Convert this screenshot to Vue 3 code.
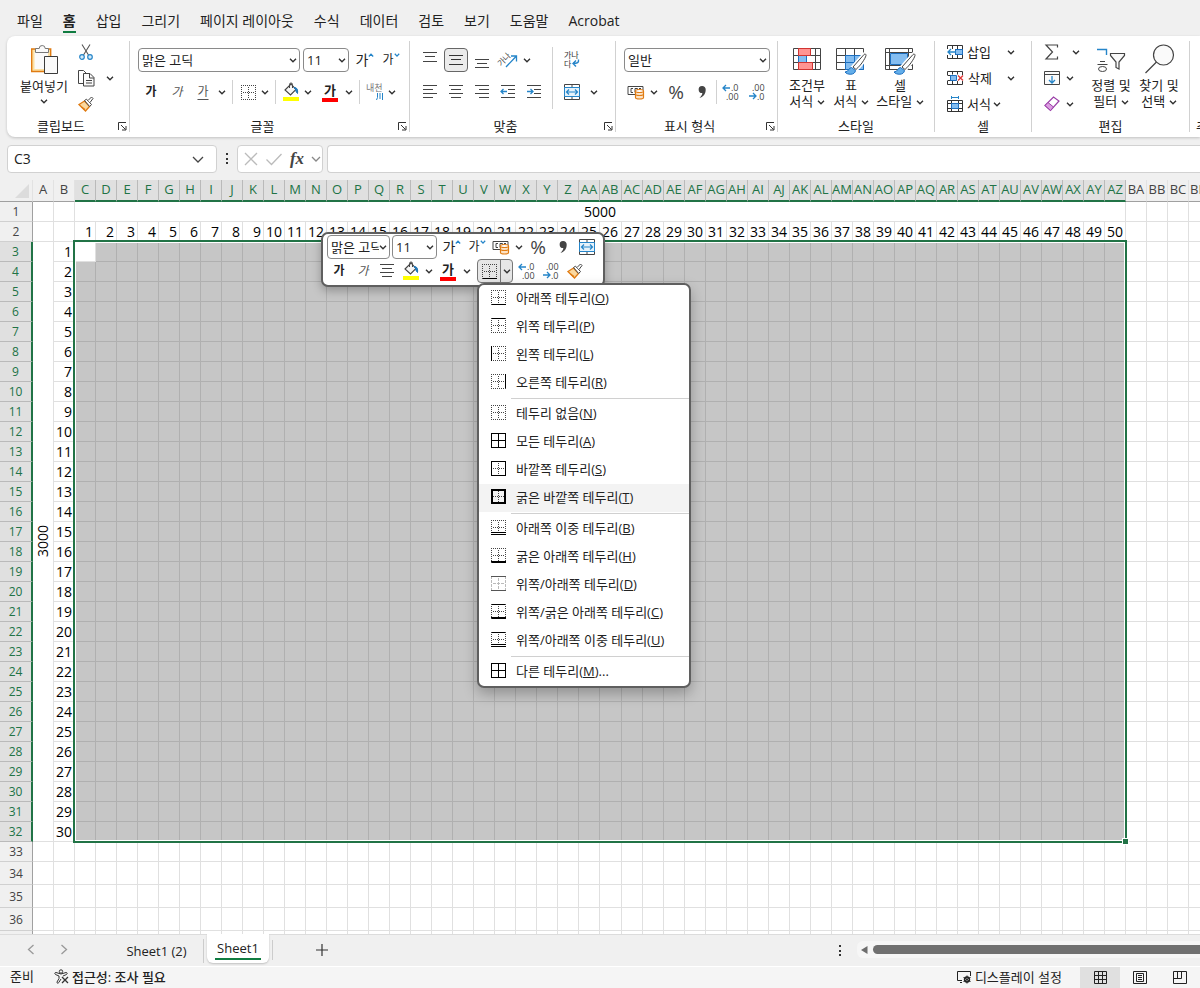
<script setup>
import { h, ref } from 'vue'

const icons = {
  chev: [8, 5, '<path d="M1 .8 4 3.8 7 .8" fill="none" stroke="#333" stroke-width="1.4"/>'],
  chevBig: [12, 7, '<path d="M1 1 6 6 11 1" fill="none" stroke="#444" stroke-width="1.3"/>'],
  chevPale: [10, 6, '<path d="M1 1 5 5 9 1" fill="none" stroke="#888" stroke-width="1.3"/>'],
  up: [6, 4, '<path d="M.8 3.5 3 1.2 5.2 3.5" fill="none" stroke="#2585c9" stroke-width="1.3"/>'],
  down: [6, 4, '<path d="M.8 .8 3 3.1 5.2 .8" fill="none" stroke="#2585c9" stroke-width="1.3"/>'],
  launch: [9, 9, '<path d="M.5 8V.5H8M3 3l4.5 4.5M8 4v4H4" fill="none" stroke="#333"/>'],
  paste: [29, 31, '<path d="M1.7 5h19v22.5h-19z" fill="#fde0a2" stroke="#e07b12" stroke-width="1.4"/><path d="M4.5 8h13.5v17H4.5z" fill="#fafafa"/><path d="M5.5 8.5V4.5h3.7a3 3 0 0 1 6 0h3.3v4z" fill="#fafafa" stroke="#777"/><path d="M14.5 12.5h13v17h-13z" fill="#fafafa" stroke="#3b3b3b"/>'],
  cut: [16, 18, '<path d="M4 1.5 10.5 12M12 1.5 5.5 12" stroke="#555" stroke-width="1.1"/><circle cx="4" cy="14" r="2.3" fill="#d5eaf8" stroke="#2585c9" stroke-width="1.2"/><circle cx="12" cy="14" r="2.3" fill="#d5eaf8" stroke="#2585c9" stroke-width="1.2"/>'],
  copy: [17, 17, '<path d="M5 13.5H.5V.5h5l2.5 2.5" fill="none" stroke="#444"/><path d="M5.5 3.5H12l4 4v8.5H5.5z" fill="#fafafa" stroke="#444"/><path d="M11.5 4v4H16M8 10.5h6M8 13h6" fill="none" stroke="#444"/>'],
  brush: [16, 16, '<path d="M1 8.5 6.5 5l5 5.5L7.5 15z" fill="#fbd9a0" stroke="#e07b12" stroke-width="1.3"/><path d="M3.5 11 7 13.5M5 12l1.5 2" stroke="#e07b12" stroke-width="1.2"/><path d="m6.5 4.5 2-1.3 5 5.3-1.8 2z" fill="#fff" stroke="#444"/><path d="M10 4.5 13.5 1l1.5 1.5-3 4" fill="#fff" stroke="#444"/>'],
  bucket: [18, 20, '<path d="M3 8 9 2l5 5.5-5.5 5.5z" fill="#f5f5f5" stroke="#444" stroke-width="1.1"/><path d="M7.5 6V2.5a1.5 1.5 0 0 1 3 0V6" fill="none" stroke="#444"/><path d="M12 5.5c3 0 4 2 3.5 6-1-1-1.7-2-2-4z" fill="#2585c9" stroke="#1c6fb0"/><path d="M1 15h16v4H1z" fill="#ff0"/>'],
  currency: [18, 16, '<path d="M1 2.5h15v8H1z" fill="#fff" stroke="#444"/><path d="M6 4.5H4v4h2M8 8.5v-4h2.5v4M12 4.5h2" fill="none" stroke="#444"/><path d="M8.5 7v6.5c0 2 8 2 8 0V7" fill="#fde3c5" stroke="#e07b12" stroke-width="1.2"/><ellipse cx="12.5" cy="7" rx="4" ry="1.5" fill="#fff" stroke="#e07b12" stroke-width="1.2"/><path d="M8.5 10c0 2 8 2 8 0" fill="none" stroke="#e07b12" stroke-width="1.2"/>'],
  comma: [10, 14, '<path d="M5 1a3.5 3.5 0 0 1 3.7 3.7C8.7 9 6 12 2.5 13c2-2 2.8-3.5 2.8-5A3.5 3.5 0 1 1 5 1z" fill="#444"/>'],
  merge: [16, 16, '<path d="M.5.5h15v15H.5z" fill="#fff" stroke="#444"/><path d="M8 .5v3M8 12.5v3" stroke="#444"/><path d="M.5 3.5h15v9H.5z" fill="#e6f2fa" stroke="#2585c9"/><path d="M2.5 8h11M5 5.5 2.5 8 5 10.5M11 5.5 13.5 8 11 10.5" fill="none" stroke="#2585c9" stroke-width="1.2"/>'],
  decInc: [18, 18, '<path d="M1 5h7M4 2 1 5l3 3" fill="none" stroke="#2585c9" stroke-width="1.3"/><text x="9" y="8" font-size="9" fill="#444">.0</text><text x="4" y="17" font-size="9" fill="#444">.00</text>'],
  decDec: [18, 18, '<path d="M1 13h7M5 10l3 3-3 3" fill="none" stroke="#2585c9" stroke-width="1.3"/><text x="4" y="8" font-size="9" fill="#444">.00</text><text x="9" y="17" font-size="9" fill="#444">.0</text>'],
  top: [24, 24, '<path d="M5 4.5h14M7 8.5h10M5 13.5h14" stroke="#444"/>'],
  middle: [24, 24, '<path d="M5 7.5h14M7 11.5h10M5 16.5h14" stroke="#333"/>'],
  bottom: [24, 24, '<path d="M5 11.5h14M7 15.5h10M5 19.5h14" stroke="#444"/>'],
  left: [24, 24, '<path d="M5 5.5h14M5 9.5h10M5 13.5h14M5 17.5h10" stroke="#444"/>'],
  center: [24, 24, '<path d="M5 5.5h14M7 9.5h10M5 13.5h14M7 17.5h10" stroke="#444"/>'],
  right: [24, 24, '<path d="M5 5.5h14M9 9.5h10M5 13.5h14M9 17.5h10" stroke="#444"/>'],
  outdent: [24, 24, '<path d="M5 5.5h14M12 9.5h7M12 13.5h7M5 17.5h14" stroke="#444"/><path d="M5 11.5h6M7.5 9 5 11.5 7.5 14" fill="none" stroke="#2585c9" stroke-width="1.3"/>'],
  indent: [24, 24, '<path d="M5 5.5h14M12 9.5h7M12 13.5h7M5 17.5h14" stroke="#444"/><path d="M5 11.5h6M8.5 9l2.5 2.5L8.5 14" fill="none" stroke="#2585c9" stroke-width="1.3"/>'],
  angle: [18, 18, '<text x="-3" y="12" font-size="8" fill="#444" transform="rotate(-45 4 8)">가나</text><path d="M7 16 17 5.5M12 5h5.5v5.5" fill="none" stroke="#2585c9" stroke-width="1.3"/>'],
  wrap: [18, 18, '<text x="1" y="7" font-size="8" fill="#333">가나</text><text x="1" y="16" font-size="8" fill="#333">다</text><path d="M15.5 8.5c.5 3-1 4-5.5 4M13 9.5l-3 3 3 3" fill="none" stroke="#2585c9" stroke-width="1.4"/>'],
  phonetic: [18, 20, '<text x="0" y="9" font-size="9" fill="#777">내천</text><path d="M11.5 11v4.5l-1 2.5M14 11v6M16.5 11v7" fill="none" stroke="#2585c9"/>'],
  cond: [28, 22, '<path d="M.5.5h27v21H.5zM.5 7.5h27M.5 14.5h27M5.5.5v21M22.5.5v21" fill="#fff" stroke="#444"/><path d="M5.5 7.5h8v7h-8z" fill="#84bdf0" stroke="#1c6fc0"/><path d="M5.5.5h12v7h-12zM5.5 14.5h14v7h-14z" fill="#ff9492" stroke="#d13431"/>'],
  table: [31, 28, '<path d="M.5.5h27v21H.5zM.5 7.5h27M.5 14.5h27M9.5.5v21M18.5.5v21" fill="#fff" stroke="#444"/><path d="M9.5 7.5h18v14h-18z" fill="#84bdf0" stroke="#1c6fc0"/><path d="M9.5 14.5h18M18.5 7.5v14" stroke="#1c6fc0"/><path d="M28 6.5 17 19l3 2.5C25 17 29 11 30 7.5c.3-1.2-1-2-2-1z" fill="#fff" stroke="#fff" stroke-width="4"/><path d="M28 6.5 17 19l3 2.5C25 17 29 11 30 7.5c.3-1.2-1-2-2-1z" fill="#fff" stroke="#444"/><path d="M15.5 19.5c-3 0-2.5 4.5-6.5 4.5 2 3 10 3.5 10.5-1.5z" fill="#63aeea" stroke="#1c6fc0"/>'],
  style: [31, 28, '<path d="M.5.5h27v21H.5zM.5 4.5h27M.5 17.5h27M4.5.5v21M23.5.5v21" fill="#fff" stroke="#444"/><path d="M5.5 5.5h17v11h-17z" fill="#84bdf0" stroke="#1c6fc0"/><path d="M28 6.5 17 19l3 2.5C25 17 29 11 30 7.5c.3-1.2-1-2-2-1z" fill="#fff" stroke="#fff" stroke-width="4"/><path d="M28 6.5 17 19l3 2.5C25 17 29 11 30 7.5c.3-1.2-1-2-2-1z" fill="#fff" stroke="#444"/><path d="M15.5 19.5c-3 0-2.5 4.5-6.5 4.5 2 3 10 3.5 10.5-1.5z" fill="#63aeea" stroke="#1c6fc0"/>'],
  insert: [16, 14, '<path d="M.5.5h15v13H.5zM.5 4.5h15M.5 9.5h15M5.5.5v13M10.5.5v13" fill="#fff" stroke="#333"/><path d="M8.5 4.5h7v5h-7z" fill="#84bdf0" stroke="#1c6fc0"/><path d="M0 4h8v6H0z" fill="#fff"/><path d="M1 7h8M4 4 1 7l3 3" fill="none" stroke="#2585c9" stroke-width="1.3"/>'],
  remove: [17, 14, '<path d="M.5 4V.5h15V4M.5 10v3.5h15V10M.5 4.5h4M.5 9.5h4M5.5.5v3M10.5.5v3M5.5 10v3M10.5 10v3" fill="none" stroke="#333"/><path d="M3.5 4.5h6v5h-6z" fill="#84bdf0" stroke="#1c6fc0"/><path d="m11 4.5 5 5M16 4.5l-5 5" stroke="#e03a3a" stroke-width="1.4"/>'],
  format: [16, 16, '<path d="M.5 4.5h15v11H.5zM.5 7.5h15M.5 12.5h15M4.5 4.5v11M11.5 4.5v11" fill="#fff" stroke="#333"/><path d="M4.5 7.5h7v5h-7z" fill="#84bdf0" stroke="#1c6fc0"/><path d="M4 1.5h8M4.5 0v3M11.5 0v3" stroke="#2585c9"/>'],
  sigma: [14, 16, '<path d="M12.5 3.5V1H1l6.5 7L1 15h11.5v-2.5" fill="none" stroke="#444" stroke-width="1.2"/>'],
  fill: [16, 14, '<path d="M.5.5h15v13H.5zM.5 3.5h15" fill="#fafafa" stroke="#444"/><path d="M8 5v7M5 9l3 3 3-3" fill="none" stroke="#2585c9" stroke-width="1.3"/>'],
  eraser: [16, 16, '<path d="m1 9.5 8.5-8.5L15 5 6.5 14.5z" fill="#fff" stroke="#9b3fa8" stroke-width="1.2"/><path d="m1 9.5 3-3L9.5 11l-3 3.5z" fill="#dc9de2" stroke="#9b3fa8"/>'],
  sort: [30, 25, '<path d="M1 1.5h9.5V7" fill="none" stroke="#2585c9" stroke-width="1.4"/><path d="M4 13.5h5M1.5 16.5h10" stroke="#444"/><ellipse cx="6.5" cy="21" rx="4" ry="2.5" fill="none" stroke="#444"/><path d="M14.5 5.5h14v2L23 14v7l-3-1.5V14l-5.5-6.5z" fill="#fafafa" stroke="#444" stroke-width="1.2"/>'],
  find: [31, 30, '<circle cx="19.5" cy="11" r="10" fill="#fafafa" stroke="#444" stroke-width="1.2"/><path d="M12.5 18 1.5 29" stroke="#444" stroke-width="1.2"/>'],
  close: [14, 14, '<path d="m1 1 12 12M13 1 1 13" stroke="#bbb" stroke-width="1.3"/>'],
  check: [18, 13, '<path d="m1.5 6.5 5 5L16.5 1" fill="none" stroke="#bbb" stroke-width="1.3"/>'],
  prev: [8, 11, '<path d="M6.5 1 1.5 5.5l5 4.5" fill="none" stroke="#999" stroke-width="1.3"/>'],
  next: [8, 11, '<path d="m1.5 1 5 4.5-5 4.5" fill="none" stroke="#999" stroke-width="1.3"/>'],
  plus: [12, 12, '<path d="M0 6h12M6 0v12" stroke="#333" stroke-width="1.2"/>'],
  dots: [4, 12, '<path d="M1 0h2v2H1zM1 5h2v2H1zM1 9h2v2H1z" fill="#333"/>'],
  tri: [8, 10, '<path d="M7.5 1v8L1 5z" fill="#6d6d6d"/>'],
  a11y: [15, 15, '<circle cx="7" cy="2.5" r="1.7" fill="none" stroke="#333"/><path d="M7 5 2 3.5C.5 3.5.5 5 1.5 5.5L5 7v2.5L3 13c-.3 1.5 1.2 1.5 1.8.5L7 10M7 5l5-1.5c1.5 0 1.5 1.5.5 2L9 7" fill="none" stroke="#333"/><path d="m8 8 6 6M14 8l-6 6" stroke="#333" stroke-width="1.3"/>'],
  display: [15, 14, '<path d="M5 10.5H.5v-9h13V6M3 12.5h2" fill="none" stroke="#222"/><circle cx="10" cy="9.5" r="2.5" fill="none" stroke="#222" stroke-width="1.4"/><path d="M10 5.5v8M6.5 7.5l7 4M13.5 7.5l-7 4" stroke="#222"/>'],
  grid: [13, 13, '<path d="M.5.5h12v12H.5zM.5 4.5h12M.5 8.5h12M4.5.5v12M8.5.5v12" fill="none" stroke="#222"/>'],
  page: [14, 13, '<path d="M.5.5h13v12H.5zM3.5 2.5h7v8h-7zM5 4.5h4M5 6.5h4M5 8.5h4" fill="none" stroke="#222"/>'],
  split: [14, 13, '<path d="M.5.5h13v12H.5zM.5 7.5h8V.5M4.5.5v7" fill="none" stroke="#222"/>'],
}

const solid = (d, w = 1) => `<path d="${d}" stroke="#000" stroke-width="${w}"/>`
const dot = (d) => `<path d="${d}" stroke="#444" stroke-dasharray="1 1"/>`
const inner = dot('M2 7.5H13') + dot('M7.5 2V13')
const frame = { t: dot('M0 .5H15'), r: dot('M14.5 0V15'), b: dot('M0 14.5H15'), l: dot('M.5 0V15') }
const border = (over = {}, mid = inner) => [15, 15, mid + Object.values({ ...frame, ...over }).join('')]
const T = solid('M0 .5H15')
const R = solid('M14.5 0V15')
const B = solid('M0 14.5H15')
const L = solid('M.5 0V15')
const thickB = solid('M0 14H15', 2)
const doubleB = '<path d="M0 11h15v4H0z" fill="#fff"/>' + solid('M0 12.5H15') + solid('M0 14.5H15')
Object.assign(icons, {
  bBottom: border({ b: B }),
  bTop: border({ t: T }),
  bLeft: border({ l: L }),
  bRight: border({ r: R }),
  bNone: border(),
  bAll: border({ t: T, r: R, b: B, l: L }, solid('M0 7.5H15') + solid('M7.5 0V15')),
  bOut: border({ t: T, r: R, b: B, l: L }),
  bThick: border({ t: solid('M0 1H15', 2), r: solid('M14 0V15', 2), b: thickB, l: solid('M1 0V15', 2) }),
  bDouble: border({ l: dot('M.5 0V11'), r: dot('M14.5 0V11'), b: doubleB }),
  bThickBottom: border({ b: thickB }),
  bTopBottom: [15, 15, '<path d="M.5 0V15M14.5 0V15M2 7.5H13M7.5 2V13" stroke="#bbb" stroke-dasharray="3 1"/><path d="M0 .5H15M0 14.5H15" stroke="#555"/>'],
  bTopThick: border({ t: T, b: thickB }),
  bTopDouble: border({ t: T, l: dot('M.5 0V11'), r: dot('M14.5 0V11'), b: doubleB }),
})

const Icon = (props) => {
  const [w, ht, body] = icons[props.n]
  return h('svg', { width: w, height: ht, viewBox: `0 0 ${w} ${ht}`, 'aria-hidden': 'true', innerHTML: body })
}
Icon.props = ['n']

const tabs = ['파일', '홈', '삽입', '그리기', '페이지 레이아웃', '수식', '데이터', '검토', '보기', '도움말', 'Acrobat']

const menu = [
  ['bBottom', '아래쪽 테두리', 'O'],
  ['bTop', '위쪽 테두리', 'P'],
  ['bLeft', '왼쪽 테두리', 'L'],
  ['bRight', '오른쪽 테두리', 'R'],
  null,
  ['bNone', '테두리 없음', 'N'],
  ['bAll', '모든 테두리', 'A'],
  ['bOut', '바깥쪽 테두리', 'S'],
  ['bThick', '굵은 바깥쪽 테두리', 'T'],
  null,
  ['bDouble', '아래쪽 이중 테두리', 'B'],
  ['bThickBottom', '굵은 아래쪽 테두리', 'H'],
  ['bTopBottom', '위쪽/아래쪽 테두리', 'D'],
  ['bTopThick', '위쪽/굵은 아래쪽 테두리', 'C'],
  ['bTopDouble', '위쪽/아래쪽 이중 테두리', 'U'],
  null,
  ['bAll', '다른 테두리', 'M', '...'],
]

const letter = (n) => String.fromCharCode(65 + n)
const cols = Array.from({ length: 62 }, (_, i) => (i < 26 ? letter(i) : letter(Math.floor(i / 26) - 1) + letter(i % 26)))
const after = cols.slice(52)
const inRange = (i) => i >= 2 && i < 52
const lowerRows = [33, 34, 35, 36, 37, 38]
const cell = ref('C3')
const formula = ref('')
</script>

<template>
  <div class="app">
    <nav class="tabs">
      <button v-for="t in tabs" :key="t" :class="{ on: t === '홈' }">{{ t }}</button>
    </nav>

    <div class="ribbon">
      <section class="group clip">
        <div class="body">
          <button class="big w52"><Icon n="paste" /><span>붙여넣기</span><Icon n="chev" /></button>
          <div class="stack">
            <div class="line"><button class="b24" aria-label="잘라내기"><Icon n="cut" /></button></div>
            <div class="line"><button class="b24" aria-label="복사"><Icon n="copy" /></button><button class="cv gap6" aria-label="복사 옵션"><Icon n="chev" /></button></div>
            <div class="line"><button class="b24" aria-label="서식 복사"><Icon n="brush" /></button></div>
          </div>
        </div>
        <footer><span>클립보드</span><button aria-label="클립보드 옵션"><Icon n="launch" /></button></footer>
      </section>

      <section class="group font">
        <div class="rows">
          <div class="line row">
            <label class="pick w162"><select aria-label="글꼴"><option>맑은 고딕</option></select><Icon n="chev" /></label>
            <label class="pick w46 gap3"><select aria-label="글꼴 크기"><option>11</option></select><Icon n="chev" /></label>
            <button class="b26 ga big-ga gap3">가<Icon n="up" /></button>
            <button class="b26 ga">가<Icon n="down" /></button>
          </div>
          <div class="line row">
            <button class="b26 ga bold">가</button>
            <button class="b26 ga ital">가</button>
            <button class="b26 ga under-l">가</button>
            <button class="cv" aria-label="밑줄 옵션"><Icon n="chev" /></button>
            <i class="sep"></i>
            <button class="b22" aria-label="테두리"><Icon n="bNone" /></button><button class="cv" aria-label="테두리 옵션"><Icon n="chev" /></button>
            <i class="sep"></i>
            <button class="b22" aria-label="채우기 색"><Icon n="bucket" /></button><button class="cv" aria-label="채우기 옵션"><Icon n="chev" /></button>
            <button class="b26 color gap3"><span>가</span></button><button class="cv" aria-label="글꼴 색 옵션"><Icon n="chev" /></button>
            <i class="sep"></i>
            <button class="b22" aria-label="윗주"><Icon n="phonetic" /></button><button class="cv" aria-label="윗주 옵션"><Icon n="chev" /></button>
          </div>
        </div>
        <footer><span>글꼴</span><button aria-label="글꼴 옵션"><Icon n="launch" /></button></footer>
      </section>

      <section class="group align">
        <div class="body">
          <div class="rows">
            <div class="line row">
              <button class="b26" aria-label="위쪽 맞춤"><Icon n="top" /></button>
              <button class="b26 sel" aria-label="가운데 맞춤"><Icon n="middle" /></button>
              <button class="b26" aria-label="아래쪽 맞춤"><Icon n="bottom" /></button>
              <button class="b26" aria-label="방향"><Icon n="angle" /></button><button class="cv" aria-label="방향 옵션"><Icon n="chev" /></button>
            </div>
            <div class="line row">
              <button v-for="n in ['left', 'center', 'right', 'outdent', 'indent']" :key="n" class="b26" :aria-label="n"><Icon :n="n" /></button>
            </div>
          </div>
          <i class="sep tall"></i>
          <div class="rows">
            <div class="line row"><button class="b26" aria-label="자동 줄 바꿈"><Icon n="wrap" /></button></div>
            <div class="line row"><button class="b26" aria-label="병합"><Icon n="merge" /></button><button class="cv gap3" aria-label="병합 옵션"><Icon n="chev" /></button></div>
          </div>
        </div>
        <footer><span>맞춤</span><button aria-label="맞춤 옵션"><Icon n="launch" /></button></footer>
      </section>

      <section class="group number">
        <div class="rows">
          <div class="line row"><label class="pick w146"><select aria-label="표시 형식"><option>일반</option></select><Icon n="chev" /></label></div>
          <div class="line row">
            <button class="b24" aria-label="회계"><Icon n="currency" /></button><button class="cv" aria-label="회계 옵션"><Icon n="chev" /></button>
            <button class="b26 pct gap3">%</button>
            <button class="b26" aria-label="쉼표"><Icon n="comma" /></button>
            <i class="sep thin"></i>
            <button class="b26" aria-label="자릿수 늘림"><Icon n="decInc" /></button>
            <button class="b26" aria-label="자릿수 줄임"><Icon n="decDec" /></button>
          </div>
        </div>
        <footer><span>표시 형식</span><button aria-label="표시 형식 옵션"><Icon n="launch" /></button></footer>
      </section>

      <section class="group styles">
        <div class="body">
          <button class="big w46"><Icon n="cond" /><span>조건부<br>서식 <Icon n="chev" /></span></button>
          <button class="big w42"><Icon n="table" /><span>표<br>서식 <Icon n="chev" /></span></button>
          <button class="big w56"><Icon n="style" /><span>셀<br>스타일 <Icon n="chev" /></span></button>
        </div>
        <footer><span>스타일</span></footer>
      </section>

      <section class="group cells">
        <div class="stack">
          <div class="line"><button class="text wide"><Icon n="insert" />삽입</button><button class="cv" aria-label="삽입 옵션"><Icon n="chev" /></button></div>
          <div class="line"><button class="text wide"><Icon n="remove" />삭제</button><button class="cv" aria-label="삭제 옵션"><Icon n="chev" /></button></div>
          <div class="line"><button class="text"><Icon n="format" />서식</button><button class="cv" aria-label="서식 옵션"><Icon n="chev" /></button></div>
        </div>
        <footer><span>셀</span></footer>
      </section>

      <section class="group edit">
        <div class="body">
          <div class="stack">
            <div class="line"><button class="b24" aria-label="합계"><Icon n="sigma" /></button><button class="cv gap6" aria-label="합계 옵션"><Icon n="chev" /></button></div>
            <div class="line"><button class="b24" aria-label="채우기"><Icon n="fill" /></button><button class="cv" aria-label="채우기 옵션"><Icon n="chev" /></button></div>
            <div class="line"><button class="b24" aria-label="지우기"><Icon n="eraser" /></button><button class="cv" aria-label="지우기 옵션"><Icon n="chev" /></button></div>
          </div>
          <button class="big w46"><Icon n="sort" /><span>정렬 및<br>필터 <Icon n="chev" /></span></button>
          <button class="big w50"><Icon n="find" /><span>찾기 및<br>선택 <Icon n="chev" /></span></button>
        </div>
        <footer><span>편집</span></footer>
      </section>

      <section class="group more"><footer><span>추가 기능</span></footer></section>
    </div>

    <div class="fbar">
      <label class="name"><input v-model="cell" aria-label="이름 상자"><Icon n="chevBig" /></label>
      <Icon n="dots" class="fdots" />
      <div class="fx">
        <button aria-label="취소"><Icon n="close" /></button>
        <button aria-label="입력"><Icon n="check" /></button>
        <button class="fxb">fx</button>
        <button aria-label="함수 옵션"><Icon n="chevPale" /></button>
      </div>
      <input v-model="formula" class="formula" aria-label="수식 입력줄">
    </div>

    <main class="sheet">
      <table>
        <colgroup>
          <col class="c-head">
          <col v-for="c in cols" :key="c" :class="c === 'AB' ? 'c-wide' : 'c-cell'">
        </colgroup>
        <thead>
          <tr>
            <th class="corner"><svg width="14" height="14" viewBox="0 0 14 14"><path d="M14 0v14H0z" fill="#dcdcdc" /></svg></th>
            <th v-for="(c, i) in cols" :key="c" :class="{ hot: inRange(i) }"><span>{{ c }}</span></th>
          </tr>
        </thead>
        <tbody>
          <tr>
            <th>1</th><td></td><td></td>
            <td colspan="50" class="mid">5000</td>
            <td v-for="c in after" :key="c"></td>
          </tr>
          <tr>
            <th>2</th><td></td><td></td>
            <td v-for="n in 50" :key="n"><span>{{ n }}</span></td>
            <td v-for="c in after" :key="c"></td>
          </tr>
          <tr v-for="r in 30" :key="r">
            <th class="hot">{{ r + 2 }}</th>
            <td v-if="r === 1" rowspan="30" class="side"><span>3000</span></td>
            <td><span>{{ r }}</span></td>
            <td v-for="n in 50" :key="n" :class="r === 1 && n === 1 ? 'active' : 'range'"></td>
            <td v-for="c in after" :key="c"></td>
          </tr>
          <tr v-for="r in lowerRows" :key="r" :class="{ loose: r > 33 }">
            <th>{{ r }}</th>
            <td v-for="c in cols" :key="c"></td>
          </tr>
        </tbody>
      </table>
      <div class="outline"><i></i></div>

      <div class="mini">
        <div class="line row">
          <label class="pick w63"><select aria-label="글꼴"><option>맑은 고딕</option></select><Icon n="chev" /></label>
          <label class="pick w48 gap2"><select aria-label="글꼴 크기"><option>11</option></select><Icon n="chev" /></label>
          <button class="b26 ga big-ga gap2">가<Icon n="up" /></button>
          <button class="b24 ga">가<Icon n="down" /></button>
          <button class="b24" aria-label="회계"><Icon n="currency" /></button><button class="cv" aria-label="회계 옵션"><Icon n="chev" /></button>
          <button class="b26 pct">%</button>
          <button class="b24" aria-label="쉼표"><Icon n="comma" /></button>
          <button class="b24" aria-label="병합"><Icon n="merge" /></button>
        </div>
        <div class="line row">
          <button class="b24 ga bold">가</button>
          <button class="b24 ga ital">가</button>
          <button class="b24" aria-label="가운데"><Icon n="center" /></button>
          <button class="b24" aria-label="채우기 색"><Icon n="bucket" /></button><button class="cv" aria-label="채우기 옵션"><Icon n="chev" /></button>
          <button class="b26 color"><span>가</span></button><button class="cv" aria-label="글꼴 색 옵션"><Icon n="chev" /></button>
          <div class="splitb"><button class="b22" aria-label="테두리"><Icon n="bBottom" /></button><button class="cv" aria-label="테두리 옵션"><Icon n="chev" /></button></div>
          <button class="b24" aria-label="자릿수 늘림"><Icon n="decInc" /></button>
          <button class="b24" aria-label="자릿수 줄임"><Icon n="decDec" /></button>
          <button class="b24" aria-label="서식 복사"><Icon n="brush" /></button>
        </div>
      </div>

      <div class="menu" role="menu">
        <template v-for="(m, i) in menu" :key="i">
          <hr v-if="!m">
          <button v-else role="menuitem" :class="{ on: m[2] === 'T' }"><Icon :n="m[0]" /><span>{{ m[1] }}(<u>{{ m[2] }}</u>){{ m[3] }}</span></button>
        </template>
      </div>
    </main>

    <div class="sheets">
      <button class="nav" aria-label="이전"><Icon n="prev" /></button>
      <button class="nav" aria-label="다음"><Icon n="next" /></button>
      <button class="stab">Sheet1 (2)</button>
      <button class="stab on"><span>Sheet1</span></button>
      <button class="add" aria-label="새 시트"><Icon n="plus" /></button>
      <Icon n="dots" class="sdots" />
      <div class="scroll"><Icon n="tri" /><i></i></div>
    </div>

    <footer class="status">
      <span>준비</span>
      <button class="acc"><Icon n="a11y" />접근성: 조사 필요</button>
      <button class="disp"><Icon n="display" />디스플레이 설정</button>
      <button class="view on" aria-label="기본"><Icon n="grid" /></button>
      <button class="view" aria-label="페이지 레이아웃"><Icon n="page" /></button>
      <button class="view" aria-label="페이지 나누기"><Icon n="split" /></button>
    </footer>
  </div>
</template>

<style>
body { overflow: hidden; }
</style>

<style scoped>
.app {
  height: 100vh;
  display: flex;
  flex-direction: column;
  overflow: hidden;
  background: #f0f0f0;
  color: #222;
  font: 13px/16px "Open Sans", "Noto Sans CJK KR", sans-serif;
}
* { box-sizing: border-box; }
button, select, input { font: inherit; color: inherit; border: 0; background: none; padding: 0; margin: 0; outline: none; }
button { display: flex; align-items: center; justify-content: center; flex: none; white-space: nowrap; }
svg { flex: none; overflow: visible; }

.tabs { flex: none; display: flex; gap: 20px; height: 36px; padding: 9px 17px 0; font-size: 14px; }
.tabs button { height: 24px; padding-top: 2px; border-bottom: 2px solid transparent; }
.tabs .on { font-weight: 700; border-color: #107c41; }

.ribbon {
  flex: none;
  display: flex;
  height: 101px;
  margin-left: 7px;
  padding: 4px 0 3px;
  background: #fff;
  border-radius: 8px 0 0 8px;
  box-shadow: 0 1px 3px #0003;
  overflow: clip;
  overflow-clip-margin: 4px;
}
.group { flex: none; display: flex; flex-direction: column; justify-content: space-between; border-right: 1px solid #d1d1d1; margin: 1px 0 2px; }
.group footer { display: flex; align-items: center; height: 18px; margin-bottom: -3px; }
.group footer span { flex: 1; text-align: center; white-space: nowrap; }
.group footer button { width: 14px; height: 14px; }
.clip { width: 123px; }
.font { width: 280px; }
.align { width: 206px; }
.number { width: 162px; }
.styles { width: 157px; }
.cells { width: 97px; }
.edit { width: 158px; }
.more { width: 60px; border: 0; justify-content: flex-end; padding-left: 3px; }
.body { display: flex; }
.clip .body { padding-left: 11px; }
.styles .body { padding-left: 6px; }
.edit .body { padding-left: 8px; }
.rows { display: flex; flex-direction: column; gap: 8px; padding-top: 7px; }
.font .rows { padding-left: 8px; }
.align .body { padding-left: 7px; }
.number .rows { padding-left: 8px; }
.line { display: flex; align-items: center; height: 26px; }
.row { height: 24px; }
.line button { height: 24px; }
.stack { display: flex; flex-direction: column; margin-top: -2px; }
.clip .stack { padding-left: 4px; }
.edit .stack { width: 48px; }
.cells .stack { padding-left: 12px; }

.b22 { width: 22px; }
.b24 { width: 24px; }
.b26 { width: 26px; }
.cv { width: 12px; }
.gap2 { margin-left: 2px; }
.gap3 { margin-left: 3px; }
.gap6 { margin-left: 6px; }
.w42 { width: 42px; }
.w46 { width: 46px; }
.w48 { width: 48px; }
.w50 { width: 50px; }
.w52 { width: 52px; }
.w56 { width: 56px; }
.w63 { width: 63px; }
.w146 { width: 146px; }
.w162 { width: 162px; }
.sep { flex: none; width: 1px; height: 24px; margin: 0 4px; background: #d1d1d1; }
.sep.tall { height: 62px; margin: 6px 6px 0 0; }
.align .rows:first-child { width: 135px; }
.sep.thin { margin: 0 1px; }

.big { flex-direction: column; justify-content: flex-start; height: 73px; padding-top: 7px; }
.big > svg:first-child { margin-bottom: auto; }
.big span { line-height: 16px; padding-bottom: 5px; }
.big span svg { vertical-align: middle; }
.clip .big { padding-top: 3px; height: 63px; }
.edit .big:last-child { padding-top: 3px; }
.text { gap: 4px; justify-content: flex-start; }
.text.wide { width: 58px; }

.pick { display: flex; align-items: center; height: 24px; padding-right: 2px; border: 1px solid #8a8a8a; border-radius: 4px; background: #fff; }
.pick select { flex: 1; min-width: 0; height: 20px; padding-left: 3px; appearance: none; overflow: hidden; }
.ga { font-size: 12px; }
.big-ga { font-size: 14px; }
.ga svg { align-self: flex-start; margin-top: 5px; }
.bold, .color { font-weight: 700; }
.ital { font-style: italic; color: #555; }
.under-l { text-decoration: underline; text-underline-offset: 3px; color: #555; }
.color span { width: 16px; border-bottom: 4px solid #f00; line-height: 15px; font-size: 13px; text-align: center; }
.pct { font-size: 19px; color: #444; }
.sel { width: 24px; margin: 0 1px; border: 1px solid #666; border-radius: 4px; background: #ebebeb; }

.fbar { flex: none; display: flex; align-items: center; height: 43px; padding: 1px 0 0 7px; }
.name { display: flex; align-items: center; width: 210px; height: 28px; padding: 0 12px 0 6px; background: #fff; border: 1px solid #d1d1d1; border-radius: 4px; }
.name input { flex: 1; min-width: 0; font-size: 14px; }
.fdots { margin: 0 8px; }
.fx { display: flex; align-items: center; justify-content: space-between; width: 86px; height: 28px; padding: 0 1px 0 6px; background: #fff; border: 1px solid #d1d1d1; border-radius: 4px; }
.fxb { font: italic 700 17px/20px "Liberation Serif", serif; color: #444; }
.formula { flex: 1; min-width: 0; height: 28px; margin-left: 4px; padding-left: 6px; background: #fff; border: 1px solid #d1d1d1; border-right: 0; border-radius: 4px 0 0 4px; }

.sheet { position: relative; flex: 1; min-height: 0; overflow: hidden; background: #fff; }
table { width: max-content; table-layout: fixed; border-collapse: separate; border-spacing: 0; }
.c-head { width: 33px; }
.c-cell { width: 21px; }
.c-wide { width: 22px; }
th, td { height: 20px; padding: 0; line-height: 18px; overflow: visible; white-space: nowrap; }
th { font-weight: 400; background: #f0f0f0; color: #444; border-right: 1px solid #a0a0a0; border-bottom: 1px solid #d0d0d0; font-size: 12px; text-align: center; }
thead th { height: 22px; border-right-color: #e2e2e2; border-bottom-color: #a0a0a0; line-height: 16px; }
thead th span { display: flex; justify-content: center; width: 20px; padding-bottom: 3px; font-size: 13px; }
th.hot { background: #e0e0e0; color: #217346; }
thead th.hot { border-bottom: 2px solid #217346; border-right-color: #bababa; }
tbody th.hot { border-right: 2px solid #217346; border-bottom-color: #bababa; }
.corner { text-align: right; vertical-align: bottom; }
.corner svg { display: block; margin: 0 3px 3px auto; }
td { border-right: 1px solid #e0e0e0; border-bottom: 1px solid #e0e0e0; font-size: 14px; color: #000; }
td span { display: flex; justify-content: flex-end; width: 20px; padding-right: 2px; }
.mid { text-align: center; }
.side span { justify-content: center; padding: 0; line-height: 20px; writing-mode: vertical-rl; transform: rotate(180deg); }
.range { background: #c6c6c6; border-color: #b0b0b0; }
.active { background: #fff; }
.loose th, .loose td { height: 23px; }
.loose th { padding-top: 2px; }
.outline { position: absolute; left: 73px; top: 60px; width: 1054px; height: 603px; border: 2px solid #217346; box-shadow: inset 0 0 0 1px #fff; pointer-events: none; }
.outline i { position: absolute; right: -4px; bottom: -4px; width: 7px; height: 7px; background: #217346; border: 1px solid #fff; }

.mini { position: absolute; z-index: 1; left: 321px; top: 52px; width: 284px; height: 55px; padding: 1px 4px; background: #fff; border: 2px solid #5f5f5f; border-radius: 7px; box-shadow: 0 4px 10px #0004; }
.splitb { display: flex; height: 24px; margin: 0 2px 0 4px; border: 1px solid #777; border-radius: 4px; background: #e6e6e6; }
.splitb button { height: 22px; }
.splitb .cv { border-left: 1px solid #777; }
.menu { position: absolute; z-index: 2; left: 477px; top: 103px; width: 214px; background: #fff; border: 2px solid #5f5f5f; border-radius: 7px; box-shadow: 0 6px 14px #0004; overflow: hidden; }
.menu button { width: 100%; height: 28px; justify-content: flex-start; gap: 10px; padding: 0 0 3px 12px; }
.menu .on { background: #f3f3f3; }
.menu hr { height: 3px; margin: 0 0 0 32px; border: solid #fff; border-width: 1px 0; background: #d0d0d0; }

.sheets { flex: none; display: flex; align-items: center; height: 32px; border-top: 1px solid #dcdcdc; padding: 0 0 2px 14px; }
.nav { width: 33px; height: 24px; }
.stab { width: 112px; height: 24px; margin-left: 12px; padding-left: 18px; border-right: 1px solid #ccc; margin-top: 2px; }
.stab.on { align-self: flex-start; width: 62px; height: 29px; margin: -1px 0 0 3px; padding: 0; background: #fff; border: 0; border-radius: 0 0 6px 6px; box-shadow: 0 1px 2px #0003; }
.stab.on span { border-bottom: 2px solid #107c41; padding: 0 2px; line-height: 20px; }
.add { width: 98px; height: 20px; margin-left: 3px; border-left: 1px solid #ccc; }
.sdots { margin: 3px 15px 0 auto; }
.scroll { display: flex; align-items: center; width: 343px; height: 17px; padding-left: 3px; gap: 5px; background: #f6f6f6; border-radius: 6px 0 0 6px; }
.scroll i { flex: 1; height: 9px; background: #707070; border-radius: 5px 0 0 5px; }

.status { flex: none; display: flex; align-items: stretch; height: 22px; line-height: 18px; padding: 0 0 2px 10px; background: #f5f5f5; border-top: 1px solid #fff; }
.status button { gap: 3px; }
.acc { margin-left: 20px; font-weight: 500; }
.disp { margin-left: auto; padding-right: 18px; }
.status .view { width: 40px; margin-bottom: -2px; padding-bottom: 1px; }
.view.on { background: #e0e0e0; }
</style>
